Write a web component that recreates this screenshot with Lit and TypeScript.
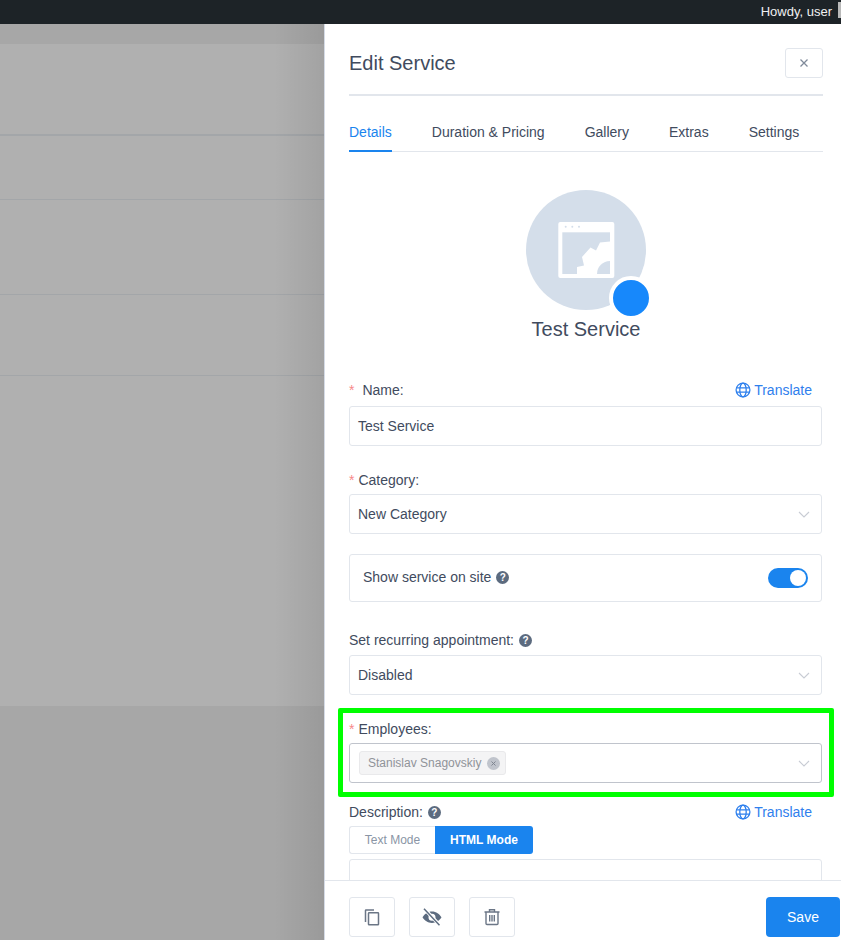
import { LitElement, html, css, svg } from 'lit';
import { customElement } from 'lit/decorators.js';

const chevron = html`<svg class="chevron" width="12" height="7" viewBox="0 0 12 7"><path d="M1 1l5 5 5-5" fill="none" stroke="#c8ccd4" stroke-width="1.1"/></svg>`;

const globe = html`<svg class="globe" width="16" height="16" viewBox="0 0 16 16" fill="none" stroke="#2f80ed" stroke-width="1.3">
  <circle cx="8" cy="8" r="6.9"/><ellipse cx="8" cy="8" rx="3.2" ry="6.9"/><path d="M1.2 5.8h13.6M1.2 10.2h13.6"/>
</svg>`;

// cog peeking out of the window's bottom right corner
const gearPath = svg`<path fill="#fff" d="M51 85V77l7-1.500-2-8.500 8.500-9.500 5.500 3 4-8 10-1V85z"/>`;

@customElement('app-root')
export class AppRoot extends LitElement {
  static styles = css`
    :host {
      display: block;
      height: 940px;
      overflow: hidden;
      font-family: "Liberation Sans", Arial, sans-serif;
      color: #414b5e;
      font-size: 14px;
    }
    .topbar {
      height: 24px;
      background: #1d2327;
      display: flex;
      justify-content: flex-end;
      align-items: center;
      color: #f0f0f1;
      font-size: 13px;
      padding-bottom: 1px;
      box-sizing: border-box;
    }
    .howdy { margin-right: 6px; }
    .avatar-stub { width: 3px; height: 16px; background: #b9b9b9; margin-top: -4px; }
    .main { display: flex; height: 916px; }

    .backdrop {
      position: relative;
      width: 324px;
      flex: none;
      background: #a7a7a7;
      padding-top: 20px;
      box-sizing: border-box;
    }
    .backdrop::after {
      content: "";
      position: absolute;
      top: 0; bottom: 0; right: 0;
      width: 50px;
      background: linear-gradient(to right, rgba(0,0,0,0), rgba(0,0,0,0.08));
    }
    .sheet { background: #b0b0b0; }
    .row { border-bottom: 1px solid #a3a6a9; box-sizing: border-box; }
    .r1 { height: 92px; border-bottom-width: 2px; }
    .r2 { height: 64px; }
    .r3 { height: 95px; }
    .r4 { height: 81px; }
    .r5 { height: 330px; border-bottom: 0; }

    .panel {
      flex: 1;
      display: flex;
      flex-direction: column;
      background: #fff;
      border-left: 1px solid #d5dbe6;
      min-width: 0;
    }
    .body {
      flex: 1;
      min-height: 0;
      overflow: hidden;
      padding: 24px 18px 0 24px;
    }
    .head {
      display: flex;
      justify-content: space-between;
      align-items: center;
      padding-bottom: 16px;
      border-bottom: 2px solid #e2e6ec;
    }
    .title { font-size: 20px; line-height: 30px; }
    .close {
      width: 38px;
      height: 30px;
      border: 1px solid #e2e6ec;
      border-radius: 3px;
      box-sizing: border-box;
      display: flex;
      align-items: center;
      justify-content: center;
    }

    .tabs {
      display: flex;
      gap: 40px;
      height: 40px;
      margin-top: 16px;
      border-bottom: 1px solid #e2e6ec;
      box-sizing: border-box;
    }
    .tab {
      height: 40px;
      line-height: 40px;
      box-sizing: border-box;
    }
    .tab.active {
      color: #1a84ee;
      border-bottom: 2px solid #1a84ee;
    }

    .profile {
      display: flex;
      flex-direction: column;
      align-items: center;
      margin-top: 38px;
    }
    .photo {
      position: relative;
      width: 120px;
      height: 120px;
      display: block;
    }
    .dot {
      position: absolute;
      left: 83px;
      top: 86px;
      width: 44px;
      height: 44px;
      box-sizing: border-box;
      border: 4px solid #fff;
      border-radius: 50%;
      background: #1788fb;
    }
    .service { font-size: 20px; line-height: 24px; margin-top: 7px; }

    .form { margin-top: 39px; margin-right: 1px; }
    .item { margin-bottom: 24px; position: relative; }
    .label {
      display: flex;
      align-items: center;
      height: 20px;
      margin-bottom: 4px;
    }
    .label.wide { margin-bottom: 6px; }
    .label.tight { margin-bottom: 5px; }
    .star { color: #f78989; margin-right: 4px; font-size: 14px; }
    .star.spaced { margin-right: 8px; }
    .translate {
      margin-left: auto;
      margin-right: 10px;
      display: flex;
      align-items: center;
      gap: 3px;
      color: #2f80ed;
    }
    .field {
      height: 40px;
      box-sizing: border-box;
      border: 1px solid #e2e6ec;
      border-radius: 3px;
      display: flex;
      align-items: center;
      justify-content: space-between;
      padding: 0 11px 0 8px;
    }
    .field.focus { border-color: #c0c4cc; padding-left: 9px; }
    .tag {
      display: flex;
      align-items: center;
      height: 24px;
      box-sizing: border-box;
      background: #f4f4f5;
      border: 1px solid #e9e9eb;
      border-radius: 3px;
      padding: 0 5px 0 8px;
      font-size: 12px;
      color: #909399;
      gap: 6px;
    }
    .tag-x {
      width: 13px;
      height: 13px;
      border-radius: 50%;
      background: #c0c4cc;
      display: flex;
      align-items: center;
      justify-content: center;
    }
    .card {
      height: 48px;
      box-sizing: border-box;
      border: 1px solid #e2e6ec;
      border-radius: 3px;
      display: flex;
      align-items: center;
      justify-content: space-between;
      padding: 0 13px;
      margin-bottom: 28px;
    }
    .card-label { display: flex; align-items: center; margin-top: -2px; }
    .help {
      width: 13px;
      height: 13px;
      border-radius: 50%;
      background: #5c6b7f;
      color: #fff;
      font-size: 10px;
      font-weight: 700;
      line-height: 13px;
      text-align: center;
      margin-left: 5px;
    }
    .switch {
      width: 40px;
      height: 20px;
      border-radius: 10px;
      background: #1a84ee;
      display: flex;
      justify-content: flex-end;
      align-items: center;
      padding-right: 2px;
      box-sizing: border-box;
    }
    .knob { width: 16px; height: 16px; border-radius: 50%; background: #fff; }

    .category { margin-bottom: 20px; }
    .employees { margin-bottom: 19px; }
    .employees::after {
      content: "";
      position: absolute;
      top: -11px;
      left: -11px;
      right: -12px;
      bottom: -14px;
      border: 5px solid #00ff00;
      border-radius: 2px;
      pointer-events: none;
    }

    .modes { display: flex; width: 184px; height: 28px; font-size: 12px; }
    .mode {
      display: flex;
      align-items: center;
      justify-content: center;
      box-sizing: border-box;
    }
    .mode.off {
      width: 86px;
      border: 1px solid #e2e6ec;
      border-right: 0;
      border-radius: 3px 0 0 3px;
      color: #8a95a5;
    }
    .mode.on {
      width: 98px;
      background: #1a84ee;
      color: #fff;
      font-weight: 700;
      border-radius: 0 3px 3px 0;
    }
    .textarea {
      height: 60px;
      margin-top: 5px;
      border: 1px solid #e2e6ec;
      border-radius: 3px;
    }

    .foot {
      height: 60px;
      flex: none;
      box-sizing: border-box;
      border-top: 1px solid #e2e6ec;
      display: flex;
      padding: 16px 1px 0 24px;
      gap: 14px;
      background: #fff;
    }
    .icon-btn {
      width: 46px;
      height: 40px;
      box-sizing: border-box;
      border: 1px solid #e2e6ec;
      border-radius: 3px;
      display: flex;
      align-items: center;
      justify-content: center;
    }
    .save {
      margin-left: auto;
      width: 74px;
      height: 40px;
      border-radius: 4px;
      background: #1a84ee;
      color: #fff;
      display: flex;
      align-items: center;
      justify-content: center;
    }
  `;

  render() {
    return html`
      <div class="topbar"><span class="howdy">Howdy, user</span><span class="avatar-stub"></span></div>
      <div class="main">
        <div class="backdrop">
          <div class="sheet">
            <div class="row r1"></div>
            <div class="row r2"></div>
            <div class="row r3"></div>
            <div class="row r4"></div>
            <div class="row r5"></div>
          </div>
        </div>
        <div class="panel">
          <div class="body">
            <div class="head">
              <div class="title">Edit Service</div>
              <div class="close">
                <svg width="10" height="10" viewBox="0 0 10 10"><path d="M1.5 1.5l7 7M8.5 1.5l-7 7" stroke="#7f8a9a" stroke-width="1.3"/></svg>
              </div>
            </div>
            <div class="tabs">
              <div class="tab active">Details</div>
              <div class="tab">Duration &amp; Pricing</div>
              <div class="tab">Gallery</div>
              <div class="tab">Extras</div>
              <div class="tab">Settings</div>
            </div>

            <div class="profile">
              <div class="photo">
                <svg width="120" height="120" viewBox="0 0 120 120">
                  <defs><clipPath id="win"><rect x="36.300" y="42.300" width="47.700" height="41.700"/></clipPath></defs>
                  <circle cx="60" cy="60" r="60" fill="#d4deea"/>
                  <rect x="32.300" y="32" width="56" height="56" rx="2" fill="#fff"/>
                  <rect x="36.300" y="42.300" width="47.700" height="41.700" fill="#d4deea"/>
                  <circle cx="39.700" cy="36.700" r="1" fill="#d4deea"/>
                  <circle cx="46.300" cy="36.700" r="1" fill="#d4deea"/>
                  <circle cx="53" cy="36.700" r="1" fill="#d4deea"/>
                  <g clip-path="url(#win)">
                    ${gearPath}
                    <circle cx="84" cy="84" r="13" fill="#d4deea"/>
                  </g>
                </svg>
                <div class="dot"></div>
              </div>
              <div class="service">Test Service</div>
            </div>

            <div class="form">
              <div class="item">
                <div class="label wide"><span class="star spaced">*</span>Name:<span class="translate">${globe}Translate</span></div>
                <div class="field">Test Service</div>
              </div>
              <div class="item category">
                <div class="label"><span class="star">*</span>Category:</div>
                <div class="field">New Category ${chevron}</div>
              </div>
              <div class="card">
                <div class="card-label">Show service on site<span class="help">?</span></div>
                <div class="switch"><div class="knob"></div></div>
              </div>
              <div class="item">
                <div class="label tight">Set recurring appointment:<span class="help">?</span></div>
                <div class="field">Disabled ${chevron}</div>
              </div>
              <div class="item employees">
                <div class="label"><span class="star">*</span>Employees:</div>
                <div class="field focus">
                  <div class="tag">Stanislav Snagovskiy
                    <span class="tag-x"><svg width="7" height="7" viewBox="0 0 7 7"><path d="M1.5 1.5l4 4M5.5 1.5l-4 4" stroke="#7f8590" stroke-width="1"/></svg></span>
                  </div>
                  ${chevron}
                </div>
              </div>
              <div class="item">
                <div class="label">Description:<span class="help">?</span><span class="translate">${globe}Translate</span></div>
                <div class="modes">
                  <div class="mode off">Text Mode</div>
                  <div class="mode on">HTML Mode</div>
                </div>
                <div class="textarea"></div>
              </div>
            </div>
          </div>

          <div class="foot">
            <div class="icon-btn">
              <svg width="18" height="18" viewBox="0 0 18 18" fill="none" stroke="#6b7686" stroke-width="1.500">
                <path d="M2.500 14V2.500a.5.5 0 0 1 .5-.5H11"/><rect x="5.500" y="4.800" width="10" height="12" rx=".6"/>
              </svg>
            </div>
            <div class="icon-btn">
              <svg width="20" height="18" viewBox="0 0 20 18">
                <path fill="#5c6b7f" fill-rule="evenodd" d="M10 3.500c4.200 0 7.500 2.700 9.500 5.800-2 3.100-5.300 5.700-9.500 5.700S2.500 12.400.5 9.300C2.500 6.200 5.800 3.500 10 3.500zm0 2.300a3.500 3.500 0 1 0 0 7 3.500 3.500 0 0 0 0-7z"/>
                <path d="M2.500 1l15 16" stroke="#fff" stroke-width="3.400"/>
                <path d="M2 .8l15.500 16.400" stroke="#5c6b7f" stroke-width="1.500"/>
              </svg>
            </div>
            <div class="icon-btn">
              <svg width="16" height="18" viewBox="0 0 16 18" fill="none" stroke="#6b7686" stroke-width="1.400">
                <path d="M.5 4h15M5.500 4V1.700h5V4M2 4v11.500a1 1 0 0 0 1 1h10a1 1 0 0 0 1-1V4M5.700 7v6.500M8 7v6.500M10.300 7v6.500"/>
              </svg>
            </div>
            <div class="save">Save</div>
          </div>
        </div>
      </div>
    `;
  }
}
